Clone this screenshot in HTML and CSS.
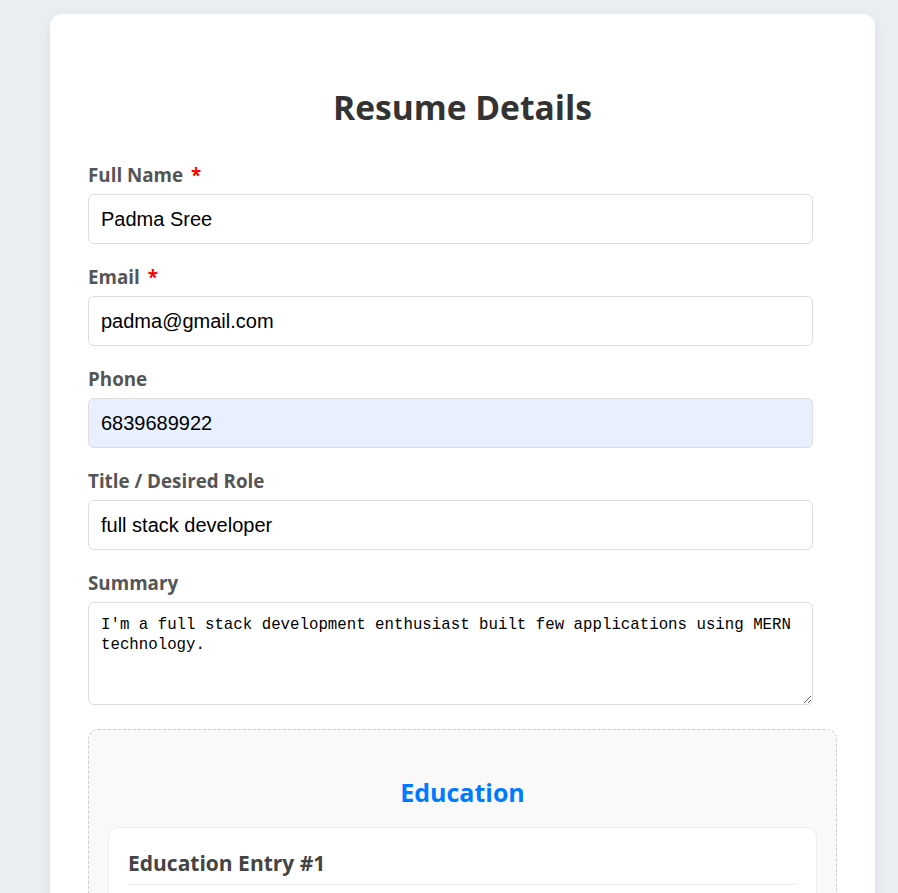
FILE: index.html
```html
<!DOCTYPE html>
<html lang="en">
<head>
<meta charset="utf-8">
<title>Resume Details</title>
<link rel="stylesheet" href="styles.css">
</head>
<body>
<div class="page">
  <form class="card">
    <h1 class="title">Resume Details</h1>

    <div class="field">
      <label class="label">Full Name <span class="req">*</span></label>
      <input class="input" type="text" value="Padma Sree">
    </div>

    <div class="field">
      <label class="label">Email <span class="req">*</span></label>
      <input class="input" type="email" value="padma@gmail.com">
    </div>

    <div class="field">
      <label class="label">Phone</label>
      <input class="input autofill" type="text" value="6839689922">
    </div>

    <div class="field">
      <label class="label">Title / Desired Role</label>
      <input class="input" type="text" value="full stack developer">
    </div>

    <div class="field">
      <label class="label">Summary</label>
      <textarea class="input textarea">I'm a full stack development enthusiast built few applications using MERN technology.</textarea>
    </div>

    <section class="section">
      <h2 class="section-title">Education</h2>
      <div class="entry">
        <h3 class="entry-title">Education Entry #1</h3>
      </div>
    </section>
  </form>
</div>
</body>
</html>
```

FILE: styles.css
```css
* { box-sizing: border-box; }

html, body {
  margin: 0;
  padding: 0;
}

body {
  background: #eaeef2;
  font-family: "Open Sans", "Noto Sans", sans-serif;
  color: #333;
}

.page {
  padding: 14px 23px 0 50px;
}

.card {
  background: #fff;
  border-radius: 12px;
  box-shadow: 0 4px 14px rgba(0, 0, 0, 0.06);
  padding: 71px 38px 40px;
  width: 825px;
  min-height: 1000px;
}

.title {
  margin: 0 0 33px;
  text-align: center;
  font-size: 33.6px;
  line-height: 44px;
  font-weight: 700;
  color: #333;
}

.field {
  margin-bottom: 20px;
  width: 725px;
}

.label {
  display: block;
  font-size: 18.8px;
  line-height: 26px;
  font-weight: 700;
  color: #555;
  margin-bottom: 6px;
}

.req {
  color: #f00;
  margin-left: 3px;
}

.input {
  display: block;
  width: 100%;
  height: 50px;
  padding: 0 12px;
  border: 1px solid #ddd;
  border-radius: 6px;
  background: #fff;
  font-family: "Liberation Sans", Arial, sans-serif;
  font-size: 20px;
  color: #000;
  outline: none;
}

.autofill {
  background: #e8f0fe;
}

.textarea {
  height: 103px;
  padding: 12px;
  font-family: "Liberation Mono", monospace;
  font-size: 15.75px;
  line-height: 20px;
  resize: vertical;
}

.section {
  margin-top: 24px;
  border: 1px dashed #ccc;
  border-radius: 10px;
  background: #f9f9f9;
  padding: 44px 19px 20px;
}

.section-title {
  margin: 0 0 17px;
  text-align: center;
  font-size: 25px;
  line-height: 36px;
  font-weight: 700;
  color: #007bff;
}

.entry {
  background: #fff;
  border: 1px solid #eee;
  border-radius: 10px;
  padding: 20px 19px;
  min-height: 200px;
}

.entry-title {
  margin: 0;
  padding-bottom: 6px;
  border-bottom: 1px solid #eee;
  font-size: 21px;
  line-height: 30px;
  font-weight: 700;
  color: #444;
}
```
